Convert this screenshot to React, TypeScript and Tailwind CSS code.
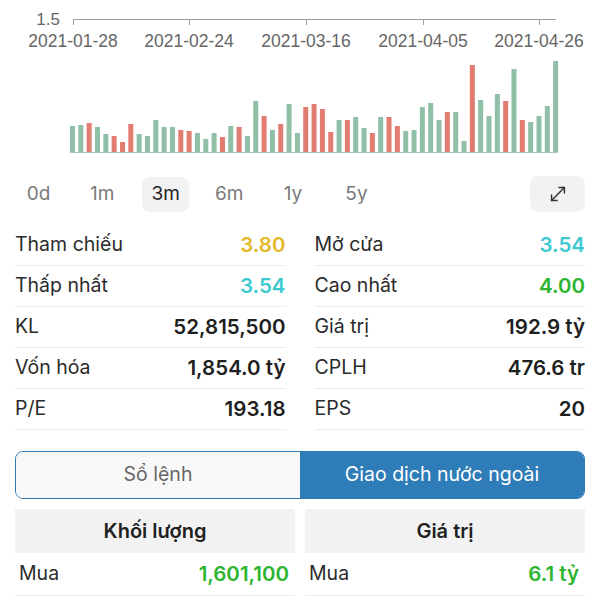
import { MoveDiagonal } from 'lucide-react'

const bars: [number, 'g' | 'r'][] = [
  [26, 'g'], [27, 'g'], [29, 'r'], [25, 'g'], [18, 'g'], [16, 'r'], [10, 'r'], [28, 'r'], [18, 'g'], [16, 'g'],
  [32, 'g'], [25, 'g'], [25, 'g'], [22, 'r'], [21, 'r'], [19, 'g'], [13, 'g'], [19, 'g'], [15, 'r'], [26, 'g'],
  [25, 'r'], [16, 'g'], [51, 'g'], [36, 'r'], [22, 'g'], [28, 'r'], [48, 'g'], [19, 'g'], [45, 'r'], [48, 'r'],
  [43, 'r'], [20, 'r'], [32, 'g'], [32, 'r'], [35, 'g'], [24, 'g'], [19, 'r'], [35, 'g'], [35, 'r'], [26, 'r'],
  [21, 'g'], [22, 'g'], [45, 'g'], [49, 'g'], [32, 'g'], [40, 'r'], [40, 'g'], [11, 'g'], [87, 'r'], [52, 'g'],
  [36, 'g'], [58, 'g'], [51, 'r'], [83, 'g'], [32, 'r'], [30, 'g'], [36, 'g'], [46, 'g'], [91, 'g']
]

const ticks = [
  { x: 73, label: '2021-01-28' },
  { x: 189, label: '2021-02-24' },
  { x: 306, label: '2021-03-16' },
  { x: 423, label: '2021-04-05' },
  { x: 539, label: '2021-04-26' }
]

const ranges = ['0d', '1m', '3m', '6m', '1y', '5y']

const leftStats = [
  { label: 'Tham chiếu', value: '3.80', color: 'text-[#e4ba2a]' },
  { label: 'Thấp nhất', value: '3.54', color: 'text-[#3ec9d1]' },
  { label: 'KL', value: '52,815,500', color: 'text-[#1f1f1f]' },
  { label: 'Vốn hóa', value: '1,854.0 tỷ', color: 'text-[#1f1f1f]' },
  { label: 'P/E', value: '193.18', color: 'text-[#1f1f1f]' }
]

const rightStats = [
  { label: 'Mở cửa', value: '3.54', color: 'text-[#3ec9d1]' },
  { label: 'Cao nhất', value: '4.00', color: 'text-[#2db52f]' },
  { label: 'Giá trị', value: '192.9 tỷ', color: 'text-[#1f1f1f]' },
  { label: 'CPLH', value: '476.6 tr', color: 'text-[#1f1f1f]' },
  { label: 'EPS', value: '20', color: 'text-[#1f1f1f]' }
]

const VolumeChart = () => (
  <svg width={600} height={160} className="block">
    <text x={60} y={25} textAnchor="end" fontSize={17} fill="#666" fontFamily="Liberation Sans, Arial, sans-serif">
      1.5
    </text>
    <line x1={73} y1={19.5} x2={556} y2={19.5} stroke="#a0a0a0" strokeWidth={1} />
    {ticks.map((t) => (
      <g key={t.label}>
        <line x1={t.x + 0.5} y1={19} x2={t.x + 0.5} y2={25} stroke="#a0a0a0" strokeWidth={1} />
        <text x={t.x} y={47} textAnchor="middle" fontSize={17.5} fill="#666" fontFamily="Liberation Sans, Arial, sans-serif">
          {t.label}
        </text>
      </g>
    ))}
    {bars.map(([h, c], i) => (
      <rect key={i} x={70 + i * 8.33} y={152 - h} width={5} height={h} fill={c === 'g' ? '#90bfa7' : '#e27c71'} />
    ))}
    <line x1={70} y1={152.5} x2={558} y2={152.5} stroke="#a9c4b3" strokeWidth={1} />
  </svg>
)

const StatColumn = ({ rows }: { rows: { label: string; value: string; color: string }[] }) => (
  <div className="flex flex-col">
    {rows.map((r) => (
      <div key={r.label} className="flex h-[41px] items-center justify-between border-b border-[#ececec]">
        <span className="text-[19.5px] text-[#2b2b2b]">{r.label}</span>
        <span className={`text-[20.5px] font-semibold ${r.color}`}>{r.value}</span>
      </div>
    ))}
  </div>
)

export default function App() {
  return (
    <div className="h-[600px] w-[600px] overflow-hidden bg-white" style={{ fontFamily: 'Inter, "Noto Sans", sans-serif' }}>
      <VolumeChart />

      <div className="mt-[16px] flex items-center justify-between px-[15px]">
        <div className="flex gap-[16.6px]">
          {ranges.map((r) => (
            <div
              key={r}
              className={`flex h-[35px] w-[47px] items-center justify-center rounded-lg text-[19px] ${r === '3m' ? 'bg-[#f2f2f2] text-[#222]' : 'text-[#7a7a7a]'}`}
            >
              {r}
            </div>
          ))}
        </div>
        <div className="flex h-[36px] w-[55px] items-center justify-center rounded-lg bg-[#f2f2f2]">
          <MoveDiagonal size={22} strokeWidth={1.6} color="#333" />
        </div>
      </div>

      <div className="mt-[13px] grid grid-cols-2 gap-x-[29px] px-[15px]">
        <StatColumn rows={leftStats} />
        <StatColumn rows={rightStats} />
      </div>

      <div className="mx-[15px] mt-[21px] flex h-[48px] overflow-hidden rounded-lg border border-[#2d79b3]">
        <div className="flex flex-1 items-center justify-center bg-[#f8f8f8] text-[19.5px] text-[#666]">Sổ lệnh</div>
        <div className="flex flex-1 items-center justify-center bg-[#2e7cb8] text-[19.5px] text-white">Giao dịch nước ngoài</div>
      </div>

      <div className="mt-[10px] grid grid-cols-2 gap-x-[10px] px-[15px]">
        <div className="flex flex-col">
          <div className="flex h-[44px] items-center justify-center bg-[#f2f2f2] text-[20px] font-semibold text-[#1f1f1f]">Khối lượng</div>
          <div className="flex h-[43px] items-center justify-between border-b border-[#ececec] pl-[4px] pr-[6px]">
            <span className="text-[19.5px] text-[#2b2b2b]">Mua</span>
            <span className="text-[20.5px] font-semibold text-[#2db52f]">1,601,100</span>
          </div>
        </div>
        <div className="flex flex-col">
          <div className="flex h-[44px] items-center justify-center bg-[#f2f2f2] text-[20px] font-semibold text-[#1f1f1f]">Giá trị</div>
          <div className="flex h-[43px] items-center justify-between border-b border-[#ececec] pl-[4px] pr-[6px]">
            <span className="text-[19.5px] text-[#2b2b2b]">Mua</span>
            <span className="text-[20.5px] font-semibold text-[#2db52f]">6.1 tỷ</span>
          </div>
        </div>
      </div>
    </div>
  )
}
